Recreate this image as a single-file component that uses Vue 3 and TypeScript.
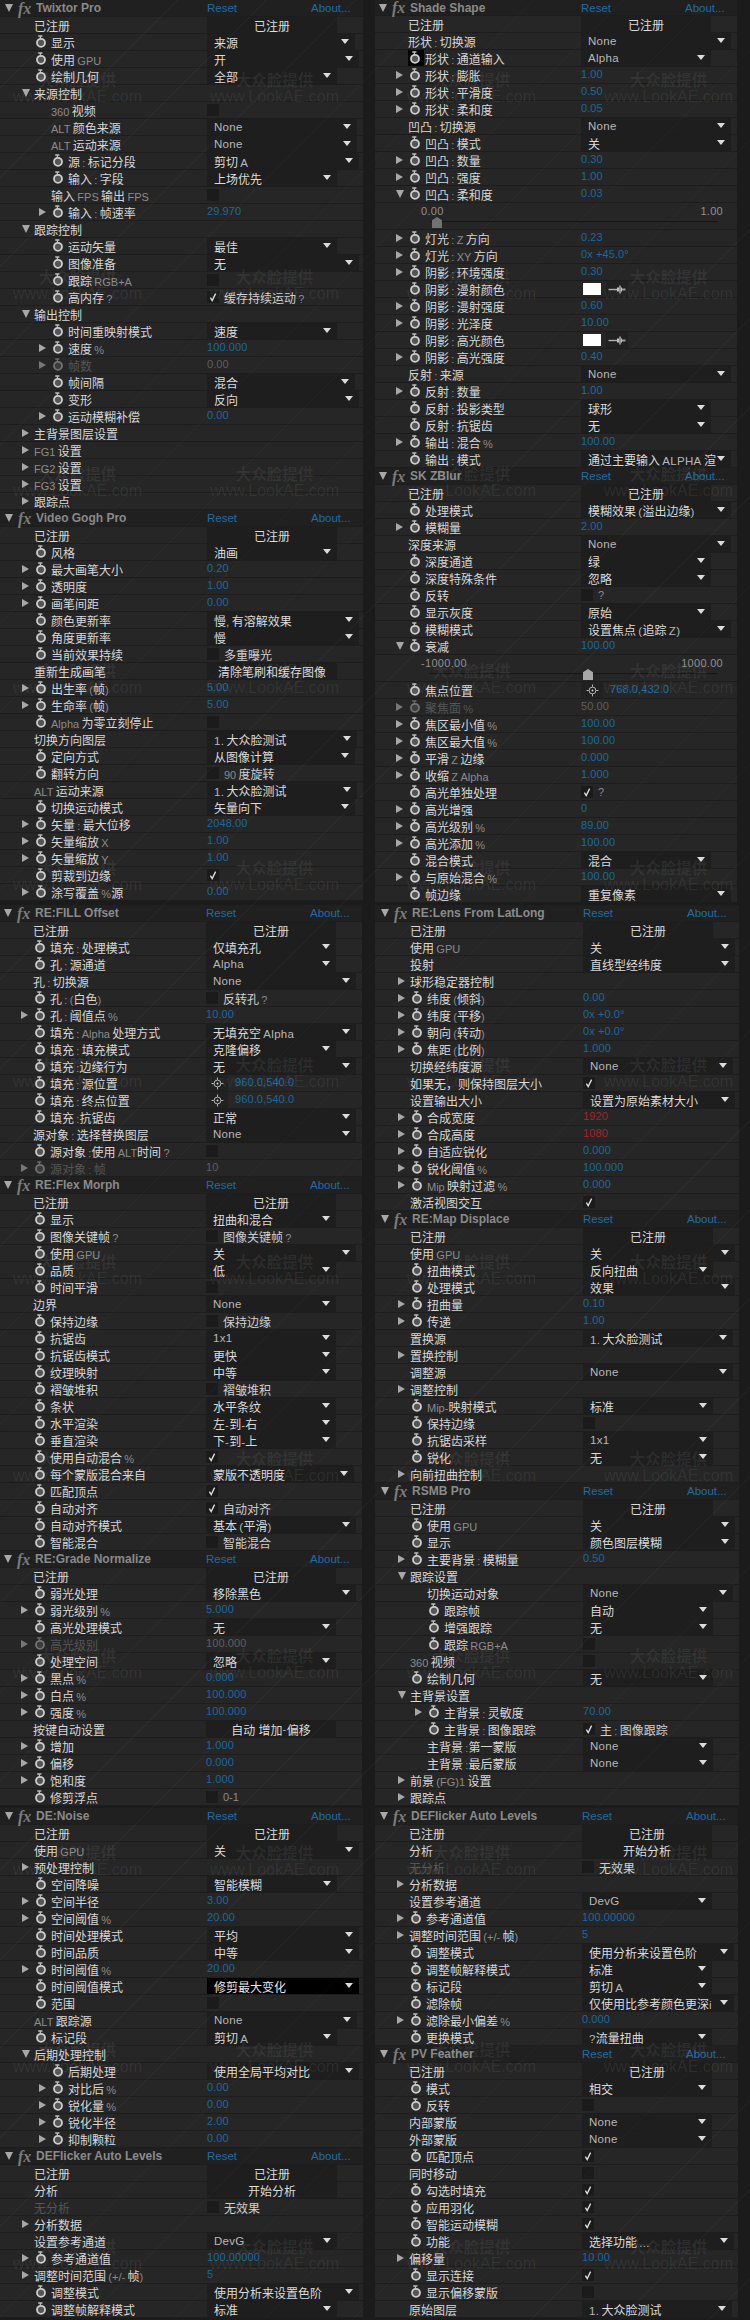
<script setup lang="ts">
interface Seg { t: string; dim: boolean }
interface Row {
  indent: boolean; watch: boolean; hl: boolean; empty: boolean; tw: string; dis: boolean
  label: Seg[]; kind: string; value: string; segs: Seg[]
}
interface Panel { title: string; off: number; gap: number; rows: Row[] }

function split(text: string): Seg[] {
  if (!text) return []
  return text
    .split(/([A-Za-z0-9%:+\-\/().?,]+)/)
    .filter((t) => t.length > 0)
    .map((t) => ({ t, dim: /[A-Za-z0-9%:+\-\/().?,]/.test(t) }))
}

function parse(s: string): Row {
  const [m, label = '', kind = '', value = ''] = s.split('|')
  return {
    indent: m.includes('1'),
    watch: m.includes('s') || m.includes('H'),
    hl: m.includes('H'),
    empty: m.includes('E'),
    tw: m.includes('r') ? 'r' : m.includes('w') ? 'd' : '',
    dis: m.includes('x'),
    label: split(label),
    kind,
    value,
    segs: split(value)
  }
}

function panel(title: string, off: number, gap: number, rows: string[]): Panel {
  return { title, off, gap, rows: ['|已注册|b|已注册', ...rows].map(parse) }
}

const left: Panel[] = [
  panel('Twixtor Pro', 1, 0, [
    's|显示|e|来源', 's|使用 GPU|D|开', 's|绘制几何|n|全部', 'w|来源控制', 'E|360 视频|c',
    'E|ALT 颜色来源|d|None', 'E|ALT 运动来源|d|None', '1s|源 : 标记分段|D|剪切 A', '1s|输入 : 字段|n|上场优先',
    'E|输入 FPS 输出 FPS|c', '1sr|输入 : 帧速率|v|29.970', 'w|跟踪控制', '1s|运动矢量|n|最佳', '1s|图像准备|D|无',
    '1s|跟踪 RGB+A|c', '1s|高内存 ?|C|缓存持续运动 ?', 'w|输出控制', '1s|时间重映射模式|n|速度', '1sr|速度 %|v|100.000',
    '1srx|帧数|g|0.00', '1s|帧间隔|e|混合', '1s|变形|D|反向', '1sr|运动模糊补偿|v|0.00', 'r|主背景图层设置',
    'r|FG1 设置', 'r|FG2 设置', 'r|FG3 设置', 'r|跟踪点'
  ]),
  panel('Video Gogh Pro', 1, 0, [
    's|风格|n|油画', 'sr|最大画笔大小|v|0.20', 'sr|透明度|v|1.00', 'sr|画笔间距|v|0.00', 's|颜色更新率|D|慢, 有溶解效果',
    's|角度更新率|D|慢', 's|当前效果持续|c|多重曝光', '|重新生成画笔|b|清除笔刷和缓存图像', 'sr|出生率 (帧)|v|5.00',
    'sr|生命率 (帧)|v|5.00', 's|Alpha 为零立刻停止|c', '|切换方向图层|d|1. 大众脸测试', 's|定向方式|e|从图像计算',
    's|翻转方向|c|90 度旋转', '|ALT 运动来源|d|1. 大众脸测试', 's|切换运动模式|e|矢量向下', 'sr|矢量 : 最大位移|v|2048.00',
    'sr|矢量缩放 X|v|1.00', 'sr|矢量缩放 Y|v|1.00', 's|剪裁到边缘|C', 'sr|涂写覆盖 %源|v|0.00'
  ]),
  panel('RE:FILL Offset', 0, 4, [
    's|填充 : 处理模式|n|仅填充孔', 's|孔 : 源通道|n|Alpha', '|孔 : 切换源|d|None', 's|孔 : (白色)|c|反转孔 ?',
    'sr|孔 : 阈值点 %|v|10.00', 's|填充 : Alpha 处理方式|d|无填充空 Alpha', 's|填充 : 填充模式|n|克隆偏移',
    's|填充 :边缘行为|d|无', 's|填充 : 源位置|p|960.0,540.0', 's|填充 : 终点位置|p|960.0,540.0', 's|填充 :抗锯齿|d|正常',
    '|源对象 : 选择替换图层|d|None', 's|源对象 :使用 ALT时间 ?|c', 'srx|源对象 : 帧|g|10'
  ]),
  panel('RE:Flex Morph', 0, 0, [
    's|显示|n|扭曲和混合', 's|图像关键帧 ?|c|图像关键帧 ?', 's|使用 GPU|d|关', 's|品质|n|低', 's|时间平滑|c', '|边界|n|None',
    's|保持边缘|c|保持边缘', 's|抗锯齿|n|1x1', 's|抗锯齿模式|n|更快', 's|纹理映射|n|中等', 's|褶皱堆积|c|褶皱堆积',
    's|条状|n|水平条纹', 's|水平渲染|n|左-到-右', 's|垂直渲染|n|下-到-上', 's|使用自动混合 %|C', 's|每个蒙版混合来自|e|蒙版不透明度',
    's|匹配顶点|C', 's|自动对齐|C|自动对齐', 's|自动对齐模式|d|基本 (平滑)', 's|智能混合|c|智能混合'
  ]),
  panel('RE:Grade Normalize', 0, 0, [
    's|弱光处理|d|移除黑色', 'sr|弱光级别 %|v|5.000', 's|高光处理模式|n|无', 'srx|高光级别|g|100.000', 's|处理空间|n|忽略',
    'sr|黑点 %|v|0.000', 'sr|白点 %|v|100.000', 'sr|强度 %|v|100.000', '|按键自动设置|b|自动 增加-偏移', 'sr|增加|v|1.000',
    'sr|偏移|v|0.000', 'sr|饱和度|v|1.000', 's|修剪浮点|c|0-1'
  ]),
  panel('DE:Noise', 1, 2, [
    '|使用 GPU|D|关', 'r|预处理控制', 's|空间降噪|n|智能模糊', 'sr|空间半径|v|3.00', 'sr|空间阈值 %|v|20.00', 's|时间处理模式|D|平均',
    's|时间品质|D|中等', 'sr|时间阈值 %|v|20.00', 's|时间阈值模式|k|修剪最大变化', 's|范围|c', '|ALT 跟踪源|d|None', 's|标记段|n|剪切 A',
    'w|后期处理控制', '1s|后期处理|D|使用全局平均对比', '1sr|对比后 %|v|0.00', '1sr|锐化量 %|v|0.00', '1sr|锐化半径|v|2.00', '1sr|抑制颗粒|v|0.00'
  ]),
  panel('DEFlicker Auto Levels', 1, 0, [
    '|分析|b|开始分析', 'x|无分析|c|无效果', 'r|分析数据', '|设置参考通道|n|DevG', 'sr|参考通道值|v|100.00000',
    'r|调整时间范围 (+/- 帧)|v|5', 's|调整模式|D|使用分析来设置色阶', 's|调整帧解释模式|n|标准'
  ])
]

const right: Panel[] = [
  panel('Shade Shape', 0, 0, [
    '|形状 : 切换源|d|None', 'H|形状 : 通道输入|n|Alpha', 'sr|形状 : 膨胀|v|1.00', 'sr|形状 : 平滑度|v|0.50', 'sr|形状 : 柔和度|v|0.05',
    '|凹凸 : 切换源|d|None', 's|凹凸 : 模式|d|关', 'sr|凹凸 : 数量|v|0.30', 'sr|凹凸 : 强度|v|1.00', 'sw|凹凸 : 柔和度|v|0.03',
    '||L|0.00,1.00,a', 'sr|灯光 : Z 方向|v|0.23', 'sr|灯光 : XY 方向|v|0x +45.0°', 'sr|阴影 : 环境强度|v|0.30', 's|阴影 : 漫射颜色|S',
    'sr|阴影 : 漫射强度|v|0.60', 'sr|阴影 : 光泽度|v|10.00', 's|阴影 : 高光颜色|S', 'sr|阴影 : 高光强度|v|0.40', '|反射 : 来源|d|None',
    'sr|反射 : 数量|v|1.00', 's|反射 : 投影类型|n|球形', 's|反射 : 抗锯齿|n|无', 'sr|输出 : 混合 %|v|100.00', 's|输出 : 模式|d|通过主要输入 ALPHA 渲'
  ]),
  panel('SK ZBlur', 0, 0, [
    's|处理模式|d|模糊效果 (溢出边缘)', 'sr|模糊量|v|2.00', '|深度来源|d|None', 's|深度通道|n|绿', 's|深度特殊条件|n|忽略', 's|反转|c|?',
    's|显示灰度|n|原始', 's|模糊模式|d|设置焦点 (追踪 Z)', 'sw|衰减|v|100.00', '||L|-1000.00,1000.00,b', 's|焦点位置|p|768.0,432.0',
    'srx|聚焦面 %|g|50.00', 'sr|焦区最小值 %|v|100.00', 'sr|焦区最大值 %|v|100.00', 'sr|平滑 Z 边缘|v|0.000', 'sr|收缩 Z Alpha|v|1.000',
    's|高光单独处理|C|?', 'sr|高光增强|v|0', 'sr|高光级别 %|v|89.00', 'sr|高光添加 %|v|100.00', 's|混合模式|n|混合', 'sr|与原始混合 %|v|100.00',
    's|帧边缘|d|重复像素'
  ]),
  panel('RE:Lens From LatLong', 2, 2, [
    '|使用 GPU|D|关', '|投射|D|直线型经纬度', 'r|球形稳定器控制', 'sr|纬度 (倾斜)|v|0.00', 'sr|纬度 (平移)|v|0x +0.0°', 'sr|朝向 (转动)|v|0x +0.0°',
    'sr|焦距 (比例)|v|1.000', '|切换经纬度源|d|None', '|如果无，则保持图层大小|C', '|设置输出大小|D|设置为原始素材大小', 'sr|合成宽度|R|1920',
    'sr|合成高度|R|1080', 'sr|自适应锐化|v|0.000', 'sr|锐化阈值 %|v|100.000', 'sr|Mip 映射过滤 %|v|0.000', '|激活视图交互|C'
  ]),
  panel('RE:Map Displace', 2, 0, [
    '|使用 GPU|D|关', 's|扭曲模式|n|反向扭曲', 's|处理模式|D|效果', 'sr|扭曲量|v|0.10', 'sr|传递|v|1.00', '|置换源|d|1. 大众脸测试', 'r|置换控制',
    '|调整源|d|None', 'r|调整控制', 's|Mip-映射模式|n|标准', 's|保持边缘|c', 's|抗锯齿采样|n|1x1', 's|锐化|n|无', 'r|向前扭曲控制'
  ]),
  panel('RSMB Pro', 2, 0, [
    's|使用 GPU|D|关', 's|显示|D|颜色图层模糊', 'sr|主要背景 : 模糊量|v|0.50', 'w|跟踪设置', 'E|切换运动对象|d|None', '1s|跟踪帧|n|自动', '1s|增强跟踪|n|无',
    '1s|跟踪 RGB+A|c', '|360 视频|c', 's|绘制几何|n|无', 'w|主背景设置', '1sr|主背景 : 灵敏度|v|70.00', '1s|主背景 : 图像跟踪|C|主 : 图像跟踪',
    'E|主背景 :第一蒙版|n|None', 'E|主背景 :最后蒙版|n|None', 'r|前景 (FG)1 设置', 'r|跟踪点'
  ]),
  panel('DEFlicker Auto Levels', 1, 2, [
    '|分析|b|开始分析', 'x|无分析|c|无效果', 'r|分析数据', '|设置参考通道|n|DevG', 'sr|参考通道值|v|100.00000', 'r|调整时间范围 (+/- 帧)|v|5',
    's|调整模式|D|使用分析来设置色阶', 's|调整帧解释模式|n|标准', 's|标记段|n|剪切 A', 's|滤除帧|D|仅使用比参考颜色更深i', 'sr|滤除最小偏差 %|v|0.000', 's|更换模式|n|?流量扭曲'
  ]),
  panel('PV Feather', 1, 0, [
    's|模式|n|相交', 's|反转|c', '|内部蒙版|n|None', '|外部蒙版|n|None', 's|匹配顶点|C', '|同时移动|c', 's|勾选时填充|C', 's|应用羽化|C', 's|智能运动模糊|C',
    's|功能|D|选择功能 ...', 'r|偏移量|v|10.00', 's|显示连接|C', 's|显示偏移蒙版|c', '|原始图层|d|1. 大众脸测试'
  ])
]

const columns = [left, right]
const marks = Array.from({ length: 48 }, (_, i) => i)
const isDrop = (k: string) => ['n', 'e', 'd', 'D', 'k'].includes(k)
const parts = (v: string) => v.split(',')
</script>

<template>
  <div class="page">
    <div class="cols">
      <div v-for="(col, ci) in columns" :key="ci" class="col" :class="{ shifted: ci === 1 }">
        <div
          v-for="p in col"
          :key="p.title + ci"
          class="panel"
          :class="['off' + p.off, 'gap' + p.gap]"
        >
          <div class="row head">
            <span class="tw-d head-tw"></span>
            <span class="fx">fx</span>
            <span class="title">{{ p.title }}</span>
            <span class="reset">Reset</span>
            <span class="about">About...</span>
          </div>
          <template v-for="(r, i) in p.rows" :key="i">
            <div v-if="r.kind === 'L'" class="row slider">
              <div class="sl-nums"><span>{{ parts(r.value)[0] }}</span><span>{{ parts(r.value)[1] }}</span></div>
              <div class="sl-track"><i class="thumb" :class="'th-' + parts(r.value)[2]"></i></div>
            </div>
            <div v-else class="row" :class="{ dis: r.dis }">
              <div class="name" :class="{ indent: r.indent }">
                <span class="tw-slot"><span v-if="r.tw" :class="'tw-' + r.tw"></span></span>
                <span v-if="r.watch || r.empty" class="w-slot" :class="{ hl: r.hl }">
                  <svg v-if="r.watch" class="watch" viewBox="0 0 12 13" width="12" height="13">
                    <path d="M3.2 1h4.2M5.4 1v2.6" stroke="#bcbcbc" stroke-width="1.3" fill="none" />
                    <circle cx="6" cy="7.8" r="4" fill="#555" stroke="#cecece" stroke-width="1.8" />
                  </svg>
                </span>
                <span class="lbl"><template v-for="(s, si) in r.label" :key="si"><span v-if="s.dim" class="dim">{{ s.t }}</span><template v-else>{{ s.t }}</template></template></span>
              </div>
              <div class="ctrl">
                <div v-if="isDrop(r.kind)" class="drop" :class="'dd-' + r.kind">
                  <span class="dd-text"><template v-for="(s, si) in r.segs" :key="si"><span v-if="s.dim" class="vdim">{{ s.t }}</span><template v-else>{{ s.t }}</template></template></span>
                  <i class="dd-arrow"></i>
                </div>
                <div v-else-if="r.kind === 'b'" class="btn">
                  <template v-for="(s, si) in r.segs" :key="si"><span v-if="s.dim" class="vdim">{{ s.t }}</span><template v-else>{{ s.t }}</template></template>
                </div>
                <span v-else-if="r.kind === 'v'" class="val">{{ r.value }}</span>
                <span v-else-if="r.kind === 'R'" class="val red">{{ r.value }}</span>
                <span v-else-if="r.kind === 'g'" class="val grey">{{ r.value }}</span>
                <template v-else-if="r.kind === 'c' || r.kind === 'C'">
                  <span class="box">
                    <svg v-if="r.kind === 'C'" viewBox="0 0 12 12" width="12" height="12"><path d="M3.4 6.6 5.2 9.6 8.6 2.6" stroke="#e2e2e2" stroke-width="1.3" fill="none" /></svg>
                  </span>
                  <span class="box-lbl"><template v-for="(s, si) in r.segs" :key="si"><span v-if="s.dim" class="dim">{{ s.t }}</span><template v-else>{{ s.t }}</template></template></span>
                </template>
                <template v-else-if="r.kind === 'p'">
                  <span class="pt">
                    <svg viewBox="0 0 13 13" width="13" height="13">
                      <circle cx="6.5" cy="6.5" r="3.4" fill="none" stroke="#b5b5b5" stroke-width="1" />
                      <circle cx="6.5" cy="6.5" r="1" fill="#d0d0d0" />
                      <path d="M6.5 0.5v2.4M6.5 10v2.4M0.5 6.5h2.4M10 6.5h2.4" stroke="#b5b5b5" stroke-width="1" />
                    </svg>
                  </span>
                  <span class="val pt-val">{{ r.value }}</span>
                </template>
                <template v-else-if="r.kind === 'S'">
                  <span class="swatch"></span>
                  <span class="dropper">
                    <svg viewBox="0 0 18 9" width="18" height="9">
                      <path d="M0.5 4.5h9" stroke="#b0b0b0" stroke-width="1.4" />
                      <rect x="9" y="2.5" width="5" height="4" fill="#c4c4c4" />
                      <rect x="11" y="0.5" width="2" height="8" fill="#8c8c8c" />
                      <path d="M14 4.5h3.5" stroke="#9a9a9a" stroke-width="2" />
                    </svg>
                  </span>
                </template>
              </div>
            </div>
          </template>
        </div>
      </div>
    </div>
    <div class="overlay" aria-hidden="true">
      <div class="lines"></div>
      <div class="marks">
        <div v-for="m in marks" :key="m" class="mark">
          <span class="m-cn">大众脸提供</span>
          <span class="m-en">www.LookAE.com</span>
        </div>
      </div>
    </div>
  </div>
</template>

<style scoped>
.page {
  position: relative;
  width: 750px;
  height: 2320px;
  overflow: hidden;
  background: #1b1b1b;
  font-family: "Liberation Sans", "Noto Sans CJK SC", sans-serif;
  font-size: 12px;
  color: #d2d2d2;
}
.cols { display: flex; align-items: flex-start; }
.col { width: 375px; }
.panel { width: 362px; background: #262626; }
.off1 { width: 363px; }
.off2 { width: 364px; }
.gap2 { margin-top: 2px; }
.gap4 { margin-top: 4px; }

.row {
  display: flex;
  align-items: stretch;
  height: 17px;
  box-sizing: border-box;
  border-bottom: 1px solid #1d1d1d;
  white-space: nowrap;
}
.off1 .row { padding-left: 1px; }
.off2 .row { padding-left: 2px; }

.head { align-items: center; background: #202020; position: relative; }
.shifted .panel:first-child .head { height: 16px; }
.head-tw { margin-left: 4px; flex: none; }
.fx {
  flex: none;
  width: 18px;
  margin-left: 5px;
  font-family: "Liberation Serif", serif;
  font-style: italic;
  font-weight: 700;
  font-size: 16px;
  line-height: 15px;
  color: #7c7c7c;
}
.title {
  flex: none;
  width: 171px;
  font-weight: 700;
  font-size: 12px;
  color: #8a8a8a;
}
.reset { flex: none; width: 104px; font-size: 11.5px; color: #1f6ca3; }
.about { flex: none; font-size: 11.5px; color: #1f6ca3; }

.name {
  flex: none;
  width: 206px;
  display: flex;
  align-items: center;
  padding-left: 21px;
  box-sizing: border-box;
}
.name.indent { padding-left: 38px; }
.tw-slot { flex: none; width: 8px; margin-right: 4px; display: flex; align-items: center; }
.tw-r {
  display: block;
  width: 0;
  height: 0;
  border-left: 7px solid #a8a8a8;
  border-top: 4px solid transparent;
  border-bottom: 4px solid transparent;
}
.tw-d {
  display: block;
  width: 0;
  height: 0;
  border-top: 8px solid #a8a8a8;
  border-left: 4px solid transparent;
  border-right: 4px solid transparent;
}
.w-slot {
  flex: none;
  width: 14px;
  height: 16px;
  margin-right: 3px;
  display: flex;
  align-items: center;
  justify-content: center;
}
.w-slot.hl { background: #000; box-shadow: 2px 0 0 #000; }
.watch { display: block; margin-top: -1px; }
.lbl { word-spacing: -1px; color: #d6d6d6; }
.dim { color: #8b8b8b; font-size: 11px; }
.dis .lbl, .dis .dim { color: #555; }
.dis .watch { opacity: 0.45; }
.dis .tw-r { border-left-color: #777; }

.ctrl { flex: 1; min-width: 0; display: flex; align-items: center; }
.drop {
  position: relative;
  height: 16px;
  box-sizing: border-box;
  padding-left: 7px;
  background: #1e1e1e;
  display: flex;
  align-items: center;
  color: #dadada;
}
.dd-n { width: 130px; }
.dd-e { width: 148px; }
.dd-d { width: 150px; }
.dd-D { width: 152px; }
.dd-k { width: 152px; background: #000; color: #e6e6e6; }
.dd-text { display: block; max-width: 142px; word-spacing: -1px; }
.dd-arrow {
  position: absolute;
  right: 6px;
  top: 5px;
  width: 0;
  height: 0;
  border-top: 5px solid #dcdcdc;
  border-left: 4px solid transparent;
  border-right: 4px solid transparent;
}
.vdim { color: #b8b8b8; font-size: 11.5px; letter-spacing: 0.3px; }
.btn {
  width: 130px;
  height: 16px;
  background: #1e1e1e;
  display: flex;
  align-items: center;
  justify-content: center;
  white-space: pre;
  color: #dadada;
}
.val {
  font-size: 11px;
  color: #1b689f;
  letter-spacing: 0.1px;
  margin-top: -2px;
}
.red { color: #a5242f; }
.grey { color: #5f5f5f; }
.box {
  flex: none;
  width: 12px;
  height: 12px;
  background: #1b1b1b;
  display: block;
  margin-right: 5px;
}
.box svg { display: block; }
.box-lbl { word-spacing: -1px; color: #cecece; }
.pt {
  flex: none;
  width: 22px;
  height: 16px;
  background: #212121;
  display: flex;
  align-items: center;
  justify-content: center;
  margin-right: 7px;
}
.swatch { flex: none; width: 18px; height: 12px; margin-left: 2px; background: #fff; }
.dropper {
  flex: none;
  width: 22px;
  height: 16px;
  margin-left: 5px;
  background: #212121;
  display: flex;
  align-items: center;
  justify-content: center;
}

.row.slider {
  display: block;
  height: 27px;
  padding-top: 1px;
  position: relative;
}
.sl-nums {
  display: flex;
  justify-content: space-between;
  width: 302px;
  margin-left: 46px;
  font-size: 11px;
  line-height: 14px;
  letter-spacing: 0.3px;
  color: #8f8f8f;
}
.sl-track {
  position: relative;
  width: 287px;
  height: 1px;
  margin: 3px 0 0 55px;
  background: #161616;
}
.thumb {
  position: absolute;
  top: -4px;
  width: 10px;
  height: 11px;
  clip-path: polygon(50% 0, 100% 30%, 100% 100%, 0 100%, 0 30%);
}
.th-a { left: 2px; background: #727272; }
.th-b { left: 153px; background: #a8a8a8; }

.overlay { position: absolute; inset: 0; pointer-events: none; }
.lines {
  position: absolute;
  inset: 0;
  background: repeating-linear-gradient(135deg, transparent 0 62px, rgba(255, 255, 255, 0.022) 62px 63px);
}
.marks {
  position: absolute;
  left: -21px;
  top: -8px;
  display: grid;
  grid-template-columns: repeat(4, 197px);
  grid-auto-rows: 197px;
}
.mark {
  display: flex;
  flex-direction: column;
  align-items: center;
  justify-content: flex-start;
  padding-top: 79px;
  color: rgba(255, 255, 255, 0.07);
  font-family: "Noto Sans CJK SC", sans-serif;
}
.m-cn { font-size: 15.5px; line-height: 17px; font-weight: 700; }
.m-en { font-family: "Liberation Sans", sans-serif; font-size: 16px; line-height: 17px; }
</style>

<style>
html, body { margin: 0; background: #1b1b1b; }
</style>
